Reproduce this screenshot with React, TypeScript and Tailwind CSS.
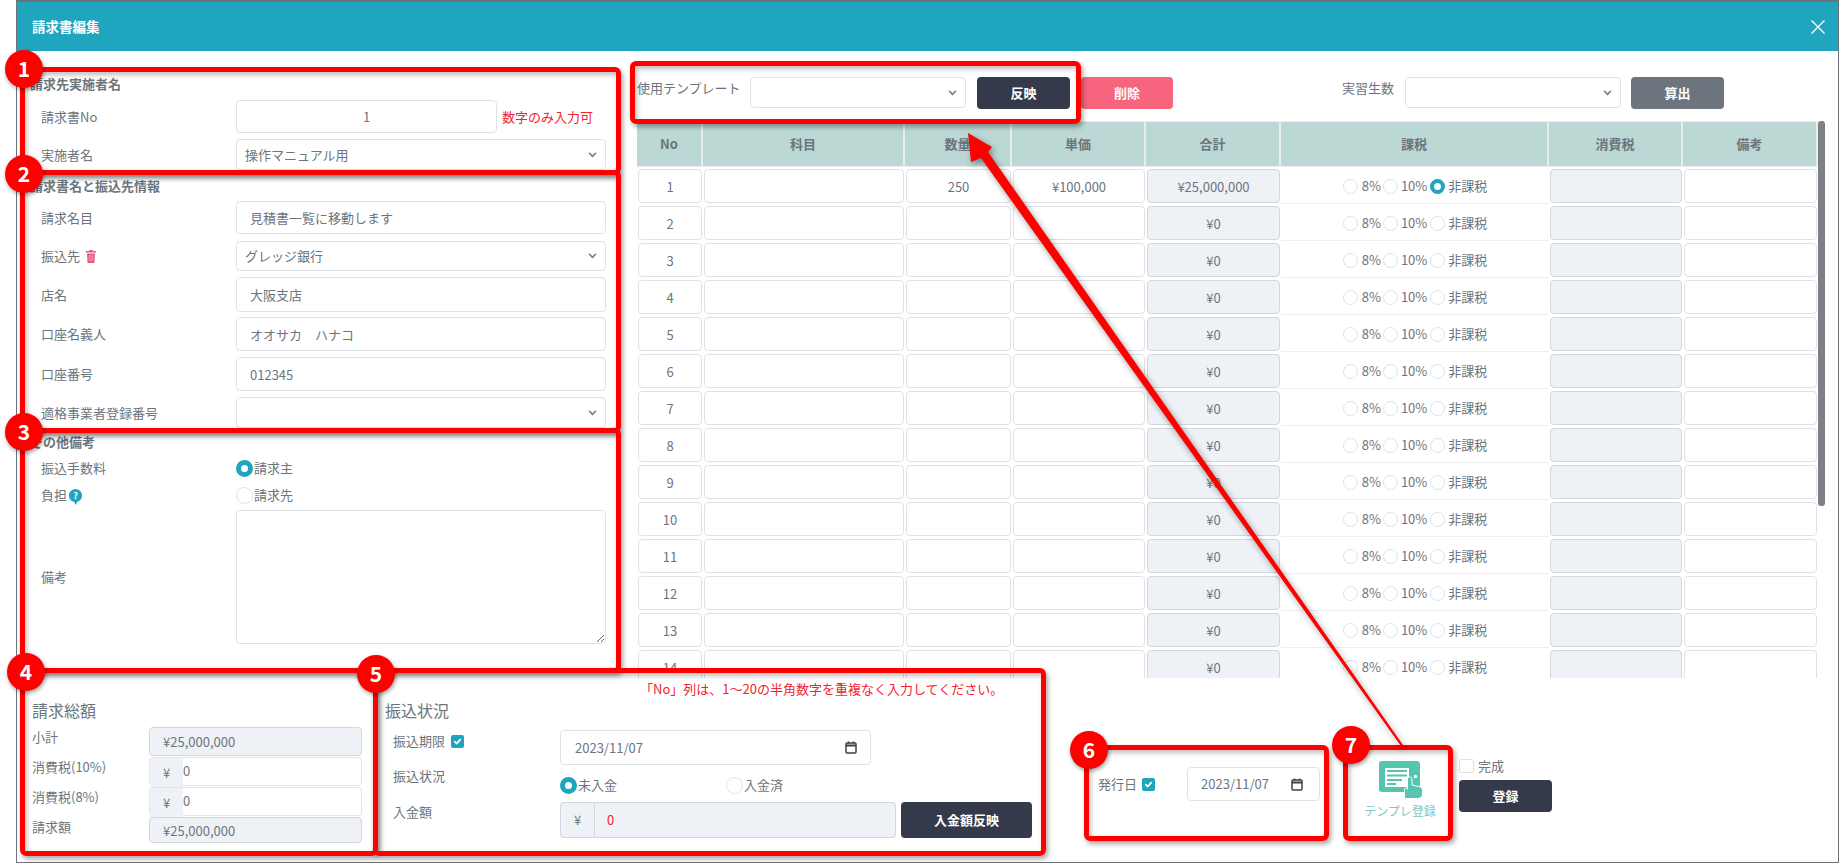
import React from "react";

const txt = "text-[13px] text-[#6c757d]";
const ctl = "border border-[#dee2e6] rounded-[4px] outline-none min-w-0 text-[13px] text-[#6c757d]";

function Chevron() {
  return (
    <svg width="9" height="6" viewBox="0 0 10 7" fill="none" stroke="#7b838a" strokeWidth="2" strokeLinecap="round" strokeLinejoin="round" className="shrink-0">
      <path d="M1.500 1.500 5 5.200l3.500-3.700" />
    </svg>
  );
}

function Select({ value = "", className = "" }: { value?: string; className?: string }) {
  return (
    <div className={`${ctl} bg-white flex items-center justify-between pl-[8px] pr-[8px] ${className}`}>
      <span>{value}</span>
      <Chevron />
    </div>
  );
}

function Field({ value = "", className = "" }: { value?: string; className?: string }) {
  return <input readOnly value={value} className={`${ctl} block ${className}`} />;
}

function Radio({ on = false, small = false, className = "" }: { on?: boolean; small?: boolean; className?: string }) {
  const size = small ? "w-[15px] h-[15px]" : "w-[17px] h-[17px]";
  const look = on
    ? small
      ? "border-[4px] border-[#20a5bf]"
      : "border-[5px] border-[#20a5bf]"
    : "border border-[#dee2e6]";
  return <span className={`block shrink-0 rounded-full bg-white ${size} ${look} ${className}`} />;
}

function Check({ className = "" }: { className?: string }) {
  return (
    <span className={`flex items-center justify-center w-[13px] h-[13px] rounded-[2px] bg-[#20a5bf] shrink-0 ${className}`}>
      <svg width="9" height="9" viewBox="0 0 10 10" fill="none" stroke="#fff" strokeWidth="2" strokeLinecap="round" strokeLinejoin="round">
        <path d="M2 5.200 4.200 7.200 8 3" />
      </svg>
    </span>
  );
}

function DateBox({ className = "" }: { className?: string }) {
  return (
    <div className={`${ctl} bg-white flex items-center justify-between ${className}`}>
      <span>2023/11/07</span>
      <svg width="12" height="13" viewBox="0 0 12 13" fill="none" className="shrink-0">
        <rect x="1" y="2" width="10" height="10" rx="1" stroke="#3a4149" strokeWidth="1.500" />
        <path d="M1 4.500h10" stroke="#3a4149" strokeWidth="2" />
        <path d="M3.500 .5v2M8.500 .5v2" stroke="#3a4149" strokeWidth="1.500" />
      </svg>
    </div>
  );
}

function Btn({ children, className = "" }: { children: React.ReactNode; className?: string }) {
  return (
    <button className={`rounded-[4px] text-white text-[13px] font-bold flex items-center justify-center shrink-0 ${className}`}>
      {children}
    </button>
  );
}

function Row({ label, children, className = "" }: { label: React.ReactNode; children: React.ReactNode; className?: string }) {
  return (
    <div className={`flex items-center pl-[24px] ${className}`}>
      <div className={`w-[195px] shrink-0 ${txt} flex items-center`}>{label}</div>
      {children}
    </div>
  );
}

function Heading({ children, className = "" }: { children: React.ReactNode; className?: string }) {
  return <div className={`pl-[13px] h-[20px] leading-[20px] text-[13px] font-bold text-[#6c757d] ${className}`}>{children}</div>;
}

function TrashIcon() {
  return (
    <svg width="10" height="13" viewBox="0 0 10 13" className="ml-[6px]">
      <path d="M3.500 0h3l.5 1H10v1.500H0V1h3z" fill="#e4587a" />
      <path d="M1 3.500h8l-.6 9.500H1.600z" fill="#e4587a" />
      <path d="M3.300 5v6M5 5v6M6.700 5v6" stroke="#f5b6c6" strokeWidth=".7" />
    </svg>
  );
}

function HelpIcon() {
  return (
    <svg width="13" height="16" viewBox="0 0 13 16" className="ml-[2px] mt-[3px]">
      <path d="M6.500 0a6.500 6.500 0 0 1 2 12.700L6.500 16l-1.200-3.100A6.500 6.500 0 0 1 6.500 0z" fill="#20a5bf" />
      <text x="6.500" y="10" textAnchor="middle" fontSize="9" fontWeight="700" fill="#fff">?</text>
    </svg>
  );
}

function TemplateIcon() {
  return (
    <svg width="44" height="38" viewBox="0 0 44 38" className="ml-[2px]">
      <rect x="0" y="0" width="41" height="31" rx="3" fill="#56c5b0" />
      <rect x="6" y="7" width="24" height="19" fill="#fff" />
      <path d="M8 10h20M8 14.500h20M8 19h15M8 23h9" stroke="#56c5b0" strokeWidth="2" />
      <circle cx="36.500" cy="15.500" r="1.700" fill="#fff" />
      <path d="M27 37.500c-1 0-1.500-1-1.500-2v-7c0-2 2.500-2 3 0v-10.500c0-2.600 4.500-2.600 4.500 0v6l7 1.500c2.500.6 3.500 2 3.500 4v3.500c0 3-2 4.500-5 4.500z" fill="#56c5b0" stroke="#fff" strokeWidth="1" />
    </svg>
  );
}

const colW = ["w-[66px]", "w-[202px]", "w-[107px]", "w-[134px]", "w-[135px]", "w-[268px]", "w-[134px]", "w-[135px]"];
const headers = ["No", "科目", "数量", "単価", "合計", "課税", "消費税", "備考"];
const rows = Array.from({ length: 20 }, (_, i) => i + 1);
const cellInput = `${ctl} block w-full h-[34px] text-center bg-white`;
const cellOff = "block w-full h-[34px] text-center rounded-[4px] border border-[#d3d6da] bg-[#eef1f5] text-[13px] text-[#6c757d] outline-none min-w-0";
const td = "h-[37px] p-0 pl-[1px] pr-[1px] pt-[2px] align-top";

function Table() {
  return (
    <div className="flex mt-[12px]">
      <div className="w-[1181px] h-[557px] overflow-hidden">
        <table className="table-fixed w-[1181px] border-separate border-spacing-0">
          <colgroup>
            {colW.map((w) => (
              <col key={w + Math.random()} className={w} />
            ))}
          </colgroup>
          <thead>
            <tr>
              {headers.map((h) => (
                <th key={h} className="h-[46px] p-0 bg-[#bbd8d5] border-r-2 border-b border-t border-[#e9ecef] text-[13px] font-bold text-[#6c757d] text-center align-middle">
                  {h}
                </th>
              ))}
            </tr>
          </thead>
          <tbody>
            {rows.map((n) => (
              <tr key={n}>
                <td className={td}><input readOnly value={n} className={cellInput} /></td>
                <td className={td}><input readOnly value="" className={cellInput} /></td>
                <td className={td}><input readOnly value={n === 1 ? "250" : ""} className={cellInput} /></td>
                <td className={td}><input readOnly value={n === 1 ? "¥100,000" : ""} className={cellInput} /></td>
                <td className={td}><input readOnly value={n === 1 ? "¥25,000,000" : "¥0"} className={cellOff} /></td>
                <td className="p-0 pt-[2px] border-b border-[#eceef1] align-middle">
                  <div className={`flex items-center justify-center ${txt}`}>
                    <Radio small />
                    <span className="ml-[4px]">8%</span>
                    <Radio small className="ml-[2px]" />
                    <span className="ml-[3px]">10%</span>
                    <Radio small on={n === 1} className="ml-[3px]" />
                    <span className="ml-[3px]">非課税</span>
                  </div>
                </td>
                <td className={td}><input readOnly value="" className={cellOff} /></td>
                <td className={td}><input readOnly value="" className={cellInput} /></td>
              </tr>
            ))}
          </tbody>
        </table>
      </div>
      <div className="w-[7px] h-[385px] rounded-[3px] bg-[#7d8084] shrink-0" />
    </div>
  );
}

function LeftColumn() {
  return (
    <div className="w-[620px] shrink-0 pt-[23px]">
      <Heading>請求先実施者名</Heading>
      <Row label="請求書No" className="mt-[6px]">
        <Field value="1" className="w-[261px] h-[33px] text-center bg-white" />
        <span className="ml-[5px] text-[13px] text-[#f5222d] whitespace-nowrap">数字のみ入力可</span>
      </Row>
      <Row label="実施者名" className="mt-[6px]">
        <Select value="操作マニュアル用" className="w-[370px] h-[31px]" />
      </Row>
      <Heading className="mt-[6px]">請求書名と振込先情報</Heading>
      <Row label="請求名目" className="mt-[5px]">
        <Field value="見積書一覧に移動します" className="w-[370px] h-[33px] pl-[13px] bg-white" />
      </Row>
      <Row label={<>振込先<TrashIcon /></>} className="mt-[7px]">
        <Select value="グレッジ銀行" className="w-[370px] h-[30px]" />
      </Row>
      <Row label="店名" className="mt-[6px]">
        <Field value="大阪支店" className="w-[370px] h-[35px] pl-[13px] bg-white" />
      </Row>
      <Row label="口座名義人" className="mt-[5px]">
        <Field value="オオサカ　ハナコ" className="w-[370px] h-[34px] pl-[13px] bg-white" />
      </Row>
      <Row label="口座番号" className="mt-[6px]">
        <Field value="012345" className="w-[370px] h-[34px] pl-[13px] bg-white" />
      </Row>
      <Row label="適格事業者登録番号" className="mt-[6px]">
        <Select className="w-[370px] h-[31px]" />
      </Row>
      <Heading className="mt-[4px]">その他備考</Heading>
      <Row label="振込手数料" className="mt-[6px] h-[20px]">
        <Radio on />
        <span className={`${txt} ml-[1px]`}>請求主</span>
      </Row>
      <Row label={<>負担<HelpIcon /></>} className="mt-[7px] h-[20px]">
        <Radio />
        <span className={`${txt} ml-[1px]`}>請求先</span>
      </Row>
      <Row label="備考" className="mt-[5px]">
        <textarea readOnly className={`${ctl} w-[370px] h-[134px] bg-white block`} />
      </Row>
    </div>
  );
}

function RightColumn() {
  return (
    <div className="flex-1 min-w-0 pt-[26px]">
      <div className="flex items-start h-[32px]">
        <span className={`${txt} w-[113px] mt-[1px] leading-[20px]`}>使用テンプレート</span>
        <Select className="w-[216px] h-[31px]" />
        <Btn className="ml-[11px] w-[93px] h-[32px] bg-[#343a4a]">反映</Btn>
        <Btn className="ml-[11px] w-[92px] h-[32px] bg-[#f6647e]">削除</Btn>
        <span className={`${txt} ml-[169px] w-[63px] mt-[1px] leading-[20px]`}>実習生数</span>
        <Select className="w-[216px] h-[31px]" />
        <Btn className="ml-[10px] w-[93px] h-[32px] bg-[#6c757d]">算出</Btn>
      </div>
      <Table />
    </div>
  );
}

function Totals() {
  const lab = `${txt} w-[117px] shrink-0 whitespace-nowrap leading-[19px]`;
  const off = "w-[213px] rounded-[4px] border border-[#d3d6da] bg-[#eef1f5] text-[13px] text-[#6c757d] pl-[13px] outline-none block";
  const group = (
    <div className="flex w-[213px] h-[29px] rounded-[4px] border border-[#e2e5e9] bg-white">
      <span className="w-[33px] h-[30px] bg-[#eef1f5] text-[13px] text-[#6c757d] flex items-center justify-center">¥</span>
      <span className="text-[13px] text-[#6c757d] leading-[26px]">0</span>
    </div>
  );
  return (
    <div className="w-[330px] ml-[15px] pt-[22px] shrink-0">
      <div className="h-[20px] leading-[20px] text-[16px] text-[#6c757d]">請求総額</div>
      <div className="flex mt-[7px]">
        <span className={lab}>小計</span>
        <input readOnly value="¥25,000,000" className={`${off} h-[29px]`} />
      </div>
      <div className="flex mt-[1px]">
        <span className={lab}>消費税(10%)</span>
        {group}
      </div>
      <div className="flex mt-[1px]">
        <span className={lab}>消費税(8%)</span>
        {group}
      </div>
      <div className="flex mt-[1px]">
        <span className={lab}>請求額</span>
        <input readOnly value="¥25,000,000" className={`${off} h-[26px]`} />
      </div>
    </div>
  );
}

function Payment() {
  const lab = `${txt} w-[175px] shrink-0 pl-[8px] flex items-center gap-[6px] leading-[20px]`;
  return (
    <div className="w-[647px] ml-[23px] shrink-0">
      <div className="h-[20px] pl-[255px] text-[13px] leading-[22px] text-[#f5222d] whitespace-nowrap">「No」列は、1〜20の半角数字を重複なく入力してください。</div>
      <div className="mt-[2px] h-[20px] leading-[20px] text-[16px] text-[#6c757d]">振込状況</div>
      <div className="flex mt-[10px]">
        <div className={`${lab} h-[22px]`}>振込期限<Check /></div>
        <DateBox className="w-[311px] h-[35px] pl-[14px] pr-[13px]" />
      </div>
      <div className="flex mt-[1px]">
        <div className={`${lab} h-[20px]`}>振込状況</div>
        <div className={`flex items-center ${txt} mt-[9px] h-[20px]`}>
          <Radio on />
          <span className="ml-[1px] w-[148px]">未入金</span>
          <Radio />
          <span className="ml-[1px]">入金済</span>
        </div>
      </div>
      <div className="flex mt-[7px]">
        <div className={`${lab} h-[20px]`}>入金額</div>
        <div className="flex w-[336px] h-[36px] rounded-[4px] border border-[#d3d6da] bg-[#eef1f5] text-[13px]">
          <span className="w-[34px] border-r border-[#d3d6da] text-[#6c757d] flex items-center justify-center">¥</span>
          <span className="pl-[12px] text-[#f5222d] flex items-center">0</span>
        </div>
        <Btn className="ml-[5px] w-[131px] h-[36px] bg-[#343a4a]">入金額反映</Btn>
      </div>
    </div>
  );
}

function BottomRest() {
  return (
    <>
      <div className="w-[222px] ml-[66px] shrink-0 pt-[89px]">
        <div className="flex items-center h-[34px]">
          <span className={txt}>発行日</span>
          <Check className="ml-[5px]" />
          <DateBox className="ml-[32px] w-[133px] h-[34px] pl-[13px] pr-[16px]" />
        </div>
      </div>
      <div className="w-[100px] ml-[30px] shrink-0 pt-[83px] flex flex-col items-center">
        <TemplateIcon />
        <span className="mt-[3px] text-[12px] leading-[18px] text-[#7cc8c8] whitespace-nowrap">テンプレ登録</span>
      </div>
      <div className="w-[93px] ml-[9px] shrink-0 pt-[81px]">
        <div className={`flex items-center h-[14px] ${txt}`}>
          <span className="w-[15px] h-[14px] rounded-[2px] border border-[#dee2e6] bg-white" />
          <span className="ml-[4px]">完成</span>
        </div>
        <Btn className="mt-[7px] w-[93px] h-[32px] bg-[#343a4a]">登録</Btn>
      </div>
    </>
  );
}

const boxShadow = "shadow-[2px_3px_5px_rgba(0,0,0,0.35),inset_2px_3px_5px_rgba(0,0,0,0.25)]";
const boxBase = `absolute border-[5px] border-[#ff0000] rounded-[6px] ${boxShadow}`;

function Marker({ n, className }: { n: number; className: string }) {
  return (
    <div className={`absolute w-[38px] h-[38px] rounded-full bg-[#ff0000] text-white text-[21px] font-bold flex items-center justify-center shadow-[1px_2px_4px_rgba(0,0,0,0.4)] ${className}`}>
      {n}
    </div>
  );
}

function Annotations() {
  return (
    <>
      <div className={`${boxBase} left-[20px] top-[67px] w-[601px] h-[108px]`} />
      <div className={`${boxBase} left-[20px] top-[170px] w-[601px] h-[263px]`} />
      <div className={`${boxBase} left-[20px] top-[428px] w-[601px] h-[245px]`} />
      <div className={`${boxBase} left-[20px] top-[668px] w-[358px] h-[188px]`} />
      <div className={`${boxBase} left-[373px] top-[668px] w-[673px] h-[188px]`} />
      <div className={`${boxBase} left-[630px] top-[61px] w-[451px] h-[63px]`} />
      <div className={`${boxBase} left-[1084px] top-[745px] w-[245px] h-[96px]`} />
      <div className={`${boxBase} left-[1343px] top-[745px] w-[110px] h-[96px]`} />
      <svg className="absolute left-0 top-0 w-[1840px] h-[863px] pointer-events-none drop-shadow-[2px_3px_3px_rgba(0,0,0,0.4)]" viewBox="0 0 1840 863">
        <polygon points="968,133 992,147 988,152 1403,745 1401,746 981,158 971,162" fill="#ff0000" />
      </svg>
      <Marker n={1} className="left-[5px] top-[50px]" />
      <Marker n={2} className="left-[5px] top-[155px]" />
      <Marker n={3} className="left-[5px] top-[413px]" />
      <Marker n={4} className="left-[7px] top-[653px]" />
      <Marker n={5} className="left-[357px] top-[655px]" />
      <Marker n={6} className="left-[1070px] top-[731px]" />
      <Marker n={7} className="left-[1332px] top-[726px]" />
    </>
  );
}

export default function App() {
  return (
    <div className="relative w-[1840px] h-[863px] overflow-hidden bg-white pl-[16px] font-['Noto_Sans_CJK_JP',sans-serif]">
      <div className="w-[1823px] h-[863px] border-l border-t-2 border-b border-r border-[#6c7378] flex flex-col bg-white">
        <div className="h-[49px] shrink-0 bg-[#20a5bf] flex items-center justify-between pl-[15px] pr-[13px]">
          <span className="text-[13.5px] font-bold text-white">請求書編集</span>
          <svg width="14" height="14" viewBox="0 0 14 14" stroke="#fff" strokeWidth="1.300">
            <path d="M.5.5l13 13M13.500.5l-13 13" />
          </svg>
        </div>
        <div className="flex h-[627px] shrink-0">
          <LeftColumn />
          <RightColumn />
        </div>
        <div className="flex flex-1 min-h-0">
          <Totals />
          <Payment />
          <BottomRest />
        </div>
      </div>
      <Annotations />
    </div>
  );
}
